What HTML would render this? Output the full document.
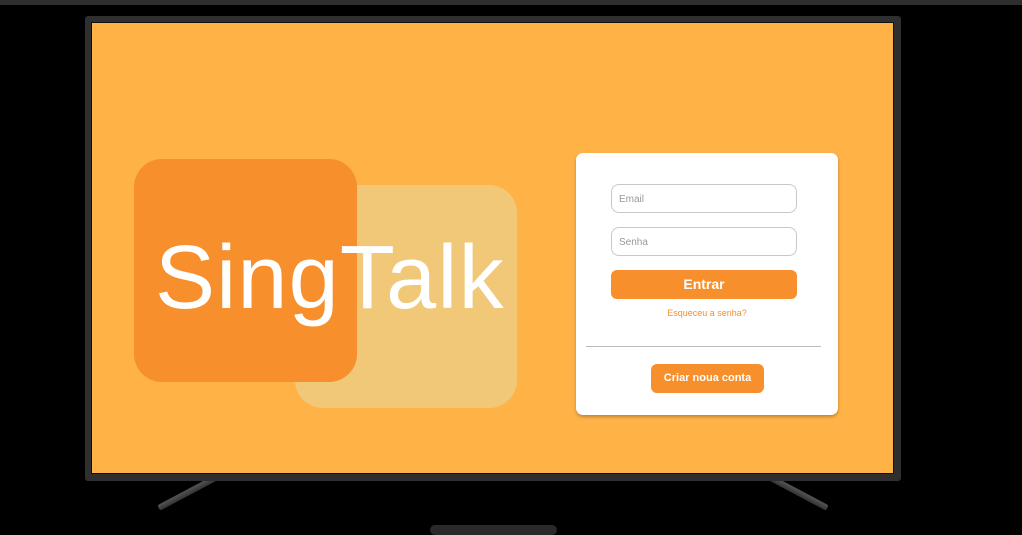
<!DOCTYPE html>
<html><head><meta charset="utf-8"><style>
*{margin:0;padding:0;box-sizing:border-box}
body{width:1022px;height:529px;background:#000;position:relative;overflow:hidden;font-family:"Liberation Sans",sans-serif}
.top{position:absolute;left:0;top:0;width:1022px;height:5px;background:#2e2e2e}
.bezel{position:absolute;left:85px;top:16px;width:816px;height:465px;background:#2f2f2f;border-radius:3px}
.screen{position:absolute;left:91px;top:22px;width:803px;height:452px;background:#ffb347;border:1px solid #111}
.leg{position:absolute;width:64px;height:6px;background:linear-gradient(180deg,#555,#333);border-radius:2px}
.sq1{position:absolute;left:134px;top:159px;width:223px;height:223px;background:#f68f2c;border-radius:28px}
.sq2{position:absolute;left:295px;top:185px;width:222px;height:223px;background:#f0c878;border-radius:28px}
.logo{position:absolute;left:155px;top:228px;font-size:90px;color:#fff;line-height:100px;letter-spacing:1.2px}
.card{position:absolute;left:576px;top:153px;width:262px;height:262px;background:#fff;border-radius:7px;box-shadow:0 2px 3px rgba(0,0,0,.25)}
.in{position:absolute;left:35px;width:186px;height:29px;border:1px solid #c8c8c8;border-radius:8px;font-size:10px;color:#999;padding:9px 0 0 7px}
.btn{position:absolute;background:#f68f2c;color:#fff;font-weight:bold;text-align:center;border-radius:6px}
.link{position:absolute;left:0;width:262px;top:155px;text-align:center;font-size:9px;color:#f68f2c}
.hr{position:absolute;left:10px;top:193px;width:235px;height:1px;background:#bbb}
.foot{position:absolute;left:430px;top:525px;width:127px;height:10px;background:#2a2a2a;border-radius:6px}
</style></head><body>
<div class="top"></div>
<div class="leg" style="left:155px;top:490px;transform:rotate(-28deg)"></div>
<div class="leg" style="left:767px;top:490px;transform:rotate(28deg)"></div>
<div class="bezel"></div>
<div class="screen"></div>
<div class="sq2"></div>
<div class="sq1"></div>
<div class="logo">SingTalk</div>
<div class="card">
<div class="in" style="top:31px">Email</div>
<div class="in" style="top:74px">Senha</div>
<div class="btn" style="left:35px;top:117px;width:186px;height:29px;font-size:14px;line-height:29px">Entrar</div>
<div class="link">Esqueceu a senha?</div>
<div class="hr"></div>
<div class="btn" style="left:75px;top:211px;width:113px;height:29px;font-size:11px;line-height:29px">Criar noua conta</div>
</div>
<div class="foot"></div>
</body></html>
